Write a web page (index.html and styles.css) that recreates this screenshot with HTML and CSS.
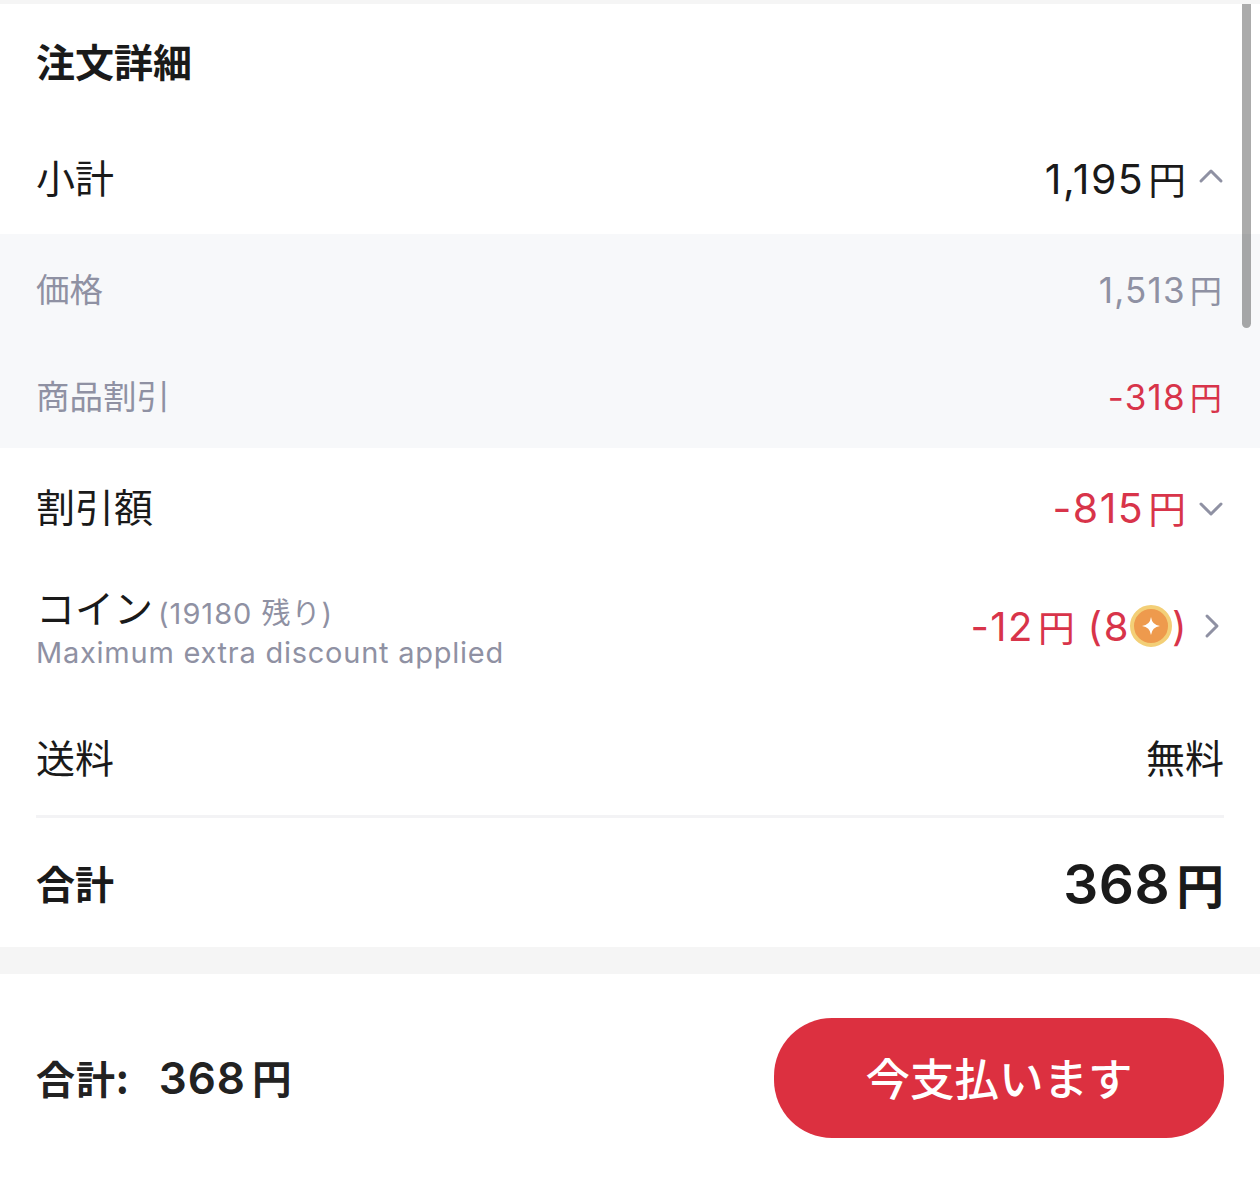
FILE: index.html
```html
<!DOCTYPE html>
<html lang="ja">
<head>
  <meta charset="UTF-8" />
  <title>注文詳細</title>
  <link rel="stylesheet" href="styles.css">
</head>
<body>
  <div class="page">
    <section class="details">
      <h2 class="title">注文詳細</h2>

      <div class="row row-subtotal">
        <span class="label">小計</span>
        <span class="value">
          <span class="price">1,195<span class="yen">円</span></span>
          <svg class="chev" width="26" height="26" viewBox="0 0 26 26"><path d="M3 18 L13 8 L23 18"/></svg>
        </span>
      </div>

      <div class="breakdown">
        <div class="sub-row">
          <span>価格</span>
          <span class="price">1,513<span class="yen">円</span></span>
        </div>
        <div class="sub-row">
          <span>商品割引</span>
          <span class="price red">-318<span class="yen">円</span></span>
        </div>
      </div>

      <div class="row row-discount">
        <span class="label">割引額</span>
        <span class="value">
          <span class="price red">-815<span class="yen">円</span></span>
          <svg class="chev" width="26" height="26" viewBox="0 0 26 26"><path d="M3 12 L13 22 L23 12"/></svg>
        </span>
      </div>

      <div class="row row-coin">
        <div class="coin-text">
          <div class="coin-head"><span class="label">コイン</span><span class="coin-left">(19180 残り)</span></div>
          <div class="coin-note">Maximum extra discount applied</div>
        </div>
        <span class="value coin-value">
          <span class="price red coin-price">-12<span class="yen">円</span> (8<span class="coin"><svg width="18" height="18" viewBox="0 0 18 18"><path d="M9 0 Q10 8 18 9 Q10 10 9 18 Q8 10 0 9 Q8 8 9 0Z"/></svg></span>)</span>
          <svg class="chev chev-right" width="26" height="26" viewBox="0 0 26 26"><path d="M9 3 L19 13 L9 23"/></svg>
        </span>
      </div>

      <div class="row row-shipping">
        <span class="label">送料</span>
        <span class="label">無料</span>
      </div>

      <div class="row row-total">
        <span class="label bold">合計</span>
        <span class="total-price">368<span class="yen">円</span></span>
      </div>
    </section>

    <div class="gap"></div>

    <footer class="paybar">
      <div class="pay-total"><span class="pay-label">合計:</span><span>368<span class="yen">円</span></span></div>
      <button class="pay-btn">今支払います</button>
    </footer>

    <div class="scrollbar"></div>
  </div>
</body>
</html>
```

FILE: styles.css
```css
* {
  box-sizing: border-box;
}

html, body {
  margin: 0;
  height: 100%;
  background: #fff;
}

body {
  font-family: Inter, "Noto Sans CJK JP", sans-serif;
  color: #1a1a1a;
}

.page {
  position: relative;
  width: 1260px;
  height: 1194px;
  overflow: hidden;
  background: #fff;
  border-top: 4px solid #f5f5f5;
}

.title {
  margin: 0;
  height: 120px;
  padding: 0 36px 8px;
  display: flex;
  align-items: center;
  font-family: "Noto Sans CJK JP", sans-serif;
  font-size: 39px;
  font-weight: 700;
}

.row {
  display: flex;
  justify-content: space-between;
  align-items: center;
  margin: 0 36px;
}

.row-subtotal { height: 110px; padding-bottom: 6px; }
.row-discount { height: 120px; padding-bottom: 6px; }
.row-coin { height: 136px; padding-bottom: 12px; }
.row-shipping { height: 114px; padding-bottom: 6px; border-bottom: 3px solid #f3f3f5; }
.row-total { height: 129px; }

.label {
  font-family: "Noto Sans CJK JP", sans-serif;
  font-size: 39px;
  line-height: 1.2;
}

.bold {
  font-weight: 700;
}

.value {
  display: flex;
  align-items: center;
  gap: 12px;
}

.price {
  font-size: 41px;
  font-weight: 400;
  letter-spacing: 1.5px;
  padding-top: 2px;
}

.yen {
  font-family: "Noto Sans CJK JP", sans-serif;
  font-size: 0.92em;
  letter-spacing: 0;
  margin-left: 4px;
}

.red {
  color: #d8344a;
}

.chev {
  fill: none;
  stroke: #8f91a3;
  stroke-width: 3;
  stroke-linecap: round;
  stroke-linejoin: round;
}

.breakdown {
  background: #f7f8fa;
  height: 214px;
  color: #8f91a3;
}

.sub-row {
  height: 107px;
  padding: 0 38px 0 36px;
  display: flex;
  justify-content: space-between;
  align-items: center;
  font-family: "Noto Sans CJK JP", sans-serif;
  font-size: 33.5px;
}

.sub-row .price {
  font-family: Inter, "Noto Sans CJK JP", sans-serif;
  font-size: 35px;
  letter-spacing: 1.2px;
}

.coin-head {
  display: flex;
  align-items: baseline;
  gap: 5px;
}

.coin-left {
  align-self: flex-end;
  font-size: 29px;
  line-height: 30px;
  letter-spacing: 1px;
  color: #8f91a3;
}

.coin-note {
  font-size: 29px;
  letter-spacing: 0.75px;
  color: #8f91a3;
  line-height: 48px;
}

.coin-value {
  gap: 10px;
  padding-bottom: 8px;
}

.coin-price {
  display: flex;
  align-items: center;
  white-space: pre;
  font-size: 40px;
  padding-top: 0;
}

.coin {
  width: 42px;
  height: 42px;
  border-radius: 50%;
  background: #ee9a4d;
  border: 4px solid #f3cf77;
  display: inline-flex;
  align-items: center;
  justify-content: center;
}

.coin svg {
  fill: #fff;
}

.total-price {
  font-size: 55px;
  font-weight: 600;
  letter-spacing: 0.5px;
}

.total-price .yen {
  font-size: 0.87em;
  margin-left: 6px;
}

.gap {
  height: 27px;
  background: #f5f5f5;
}

.paybar {
  height: 220px;
  padding: 0 36px 12px;
  display: flex;
  justify-content: space-between;
  align-items: center;
}

.pay-total {
  display: flex;
  align-items: center;
  gap: 29px;
  padding-bottom: 3px;
  font-size: 44px;
  font-weight: 600;
  letter-spacing: 1px;
  color: #222;
}

.pay-total .yen {
  font-size: 0.9em;
  margin-left: 6px;
}

.pay-label {
  font-family: "Noto Sans CJK JP", sans-serif;
  font-size: 39px;
  font-weight: 700;
}

.pay-btn {
  width: 450px;
  height: 120px;
  padding-bottom: 4px;
  border: none;
  border-radius: 58px;
  background: #dc3040;
  color: #fff;
  font-family: "Noto Sans CJK JP", sans-serif;
  font-size: 44.5px;
  font-weight: 500;
}

.scrollbar {
  position: absolute;
  top: -4px;
  left: 1242px;
  width: 9px;
  height: 328px;
  border-radius: 0 0 5px 5px;
  background: rgba(0, 0, 0, 0.33);
}
```
